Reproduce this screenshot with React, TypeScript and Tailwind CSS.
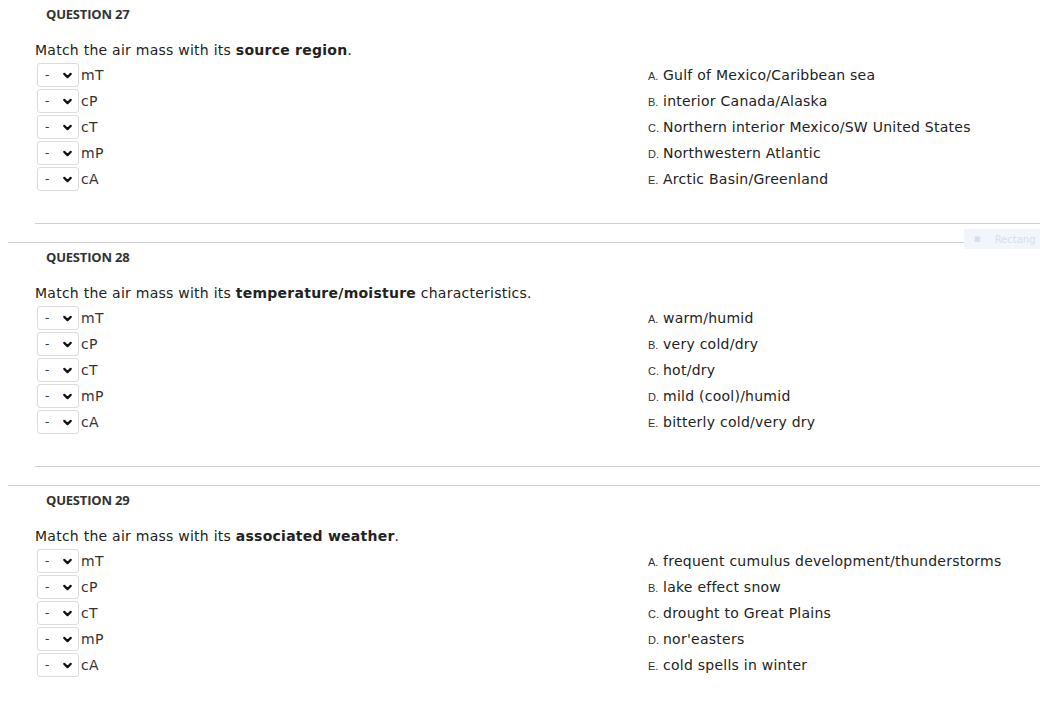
import { ChevronDown } from 'lucide-react'

const masses = ['mT', 'cP', 'cT', 'mP', 'cA']

const questions = [
  {
    num: 27,
    before: 'Match the air mass with its ',
    bold: 'source region',
    after: '.',
    answers: [
      'Gulf of Mexico/Caribbean sea',
      'interior Canada/Alaska',
      'Northern interior Mexico/SW United States',
      'Northwestern Atlantic',
      'Arctic Basin/Greenland',
    ],
  },
  {
    num: 28,
    before: 'Match the air mass with its ',
    bold: 'temperature/moisture',
    after: ' characteristics.',
    answers: ['warm/humid', 'very cold/dry', 'hot/dry', 'mild (cool)/humid', 'bitterly cold/very dry'],
  },
  {
    num: 29,
    before: 'Match the air mass with its ',
    bold: 'associated weather',
    after: '.',
    answers: [
      'frequent cumulus development/thunderstorms',
      'lake effect snow',
      'drought to Great Plains',
      "nor'easters",
      'cold spells in winter',
    ],
  },
]

const letters = ['A', 'B', 'C', 'D', 'E']

function Select() {
  return (
    <div className="flex h-[24px] w-[42px] items-center justify-between rounded-[3px] border border-[#dcdcdc] bg-white pl-[7px] pr-[4px]">
      <span className="text-[12px] leading-none text-[#333]">-</span>
      <ChevronDown className="h-[13px] w-[13px] text-[#111]" strokeWidth={4} />
    </div>
  )
}

function Question({ q, first }: { q: (typeof questions)[number]; first: boolean }) {
  return (
    <div className={first ? 'pt-[5px]' : 'ml-2 border-t border-[#d0d0d0] pt-[5px]'}>
      <div className={first ? 'pl-[46px]' : 'pl-[38px]'}>
        <h3 className="flex h-[20px] items-center text-[13px] font-bold tracking-[-0.2px] text-[#333] [font-family:'Open_Sans',sans-serif]">
          QUESTION {q.num}
        </h3>
      </div>
      <div className={first ? 'pl-[35px]' : 'pl-[27px]'}>
        <p className="mt-[15px] flex h-[20px] items-center text-[14px] tracking-[0.25px] text-[#222]">
          <span className="whitespace-pre">
            {q.before}
            <b>{q.bold}</b>
            {q.after}
          </span>
        </p>
        <div className="mt-[3px] flex">
          <div className="flex w-[613px] flex-col">
            {masses.map((m) => (
              <div key={m} className="flex h-[26px] items-start pl-[2px]">
                <Select />
                <span className="ml-[2px] mt-[2px] text-[14px] tracking-[0.25px] text-[#333]">{m}</span>
              </div>
            ))}
          </div>
          <div className="flex flex-col">
            {q.answers.map((a, i) => (
              <div key={a} className="flex h-[26px] items-start pt-[2px]">
                <span className="mt-[3px] w-[15px] text-[11px] text-[#333] [font-family:'Liberation_Sans',sans-serif]">
                  {letters[i]}.
                </span>
                <span className="text-[14px] tracking-[0.25px] text-[#222]">{a}</span>
              </div>
            ))}
          </div>
        </div>
        <div className="mt-[30px] border-t border-[#d0d0d0]" />
        <div className="h-[18px]" />
      </div>
    </div>
  )
}

export default function App() {
  return (
    <div className="relative h-[706px] w-[1040px] overflow-hidden bg-white [font-family:'DejaVu_Sans',Verdana,sans-serif]">
      {questions.map((q, i) => (
        <Question key={q.num} q={q} first={i === 0} />
      ))}
      <div className="absolute left-[964px] top-[229px] flex h-[20px] w-[80px] items-center gap-[14px] bg-[#f1f6fd] pl-[10px] text-[10px] text-[#d6deea]">
        <span className="text-[7px]">■</span>
        <span>Rectang</span>
      </div>
    </div>
  )
}
